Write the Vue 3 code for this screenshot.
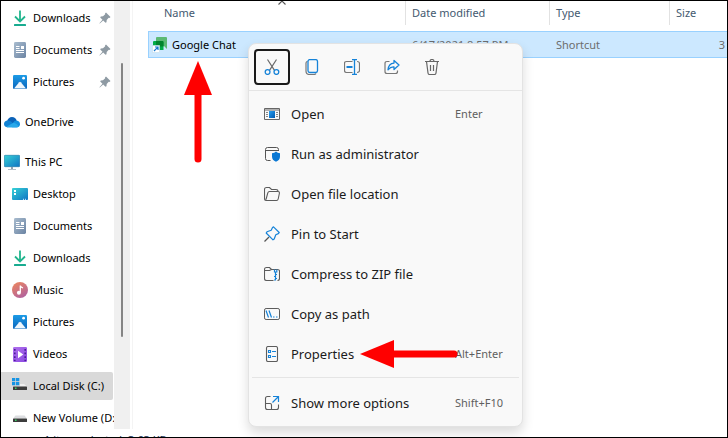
<script setup>
const groups = [
  {
    name: 'Quick access',
    items: [
      { label: 'Downloads', icon: 'downloads', pinned: true },
      { label: 'Documents', icon: 'documents', pinned: true },
      { label: 'Pictures', icon: 'pictures', pinned: true },
    ],
  },
  { name: 'Cloud', items: [{ label: 'OneDrive', icon: 'onedrive', root: true }] },
  {
    name: 'Computer',
    items: [
      { label: 'This PC', icon: 'pc', root: true },
      { label: 'Desktop', icon: 'desktop' },
      { label: 'Documents', icon: 'documents' },
      { label: 'Downloads', icon: 'downloads' },
      { label: 'Music', icon: 'music' },
      { label: 'Pictures', icon: 'pictures' },
      { label: 'Videos', icon: 'videos' },
      { label: 'Local Disk (C:)', icon: 'disk-c', selected: true },
      { label: 'New Volume (D:)', icon: 'disk-d' },
    ],
  },
]

const tools = [
  { label: 'Cut', icon: 'cut', focused: true },
  { label: 'Copy', icon: 'copy' },
  { label: 'Rename', icon: 'rename' },
  { label: 'Share', icon: 'share' },
  { label: 'Delete', icon: 'delete' },
]

const actions = [
  { label: 'Open', icon: 'open', keys: 'Enter' },
  { label: 'Run as administrator', icon: 'admin' },
  { label: 'Open file location', icon: 'folder' },
  { label: 'Pin to Start', icon: 'pin-start' },
  { label: 'Compress to ZIP file', icon: 'zip' },
  { label: 'Copy as path', icon: 'path' },
  { label: 'Properties', icon: 'properties', keys: 'Alt+Enter' },
]
</script>

<template>
  <div class="window">
    <svg class="sprite" aria-hidden="true">
      <defs>
        <linearGradient id="g-doc" x1="0" y1="0" x2="1" y2="1"><stop offset="0" stop-color="#a9bccf" /><stop offset="1" stop-color="#6b84a3" /></linearGradient>
        <linearGradient id="g-pic" x1="0" y1="0" x2="0" y2="1"><stop offset="0" stop-color="#1c9be6" /><stop offset="1" stop-color="#0a66bd" /></linearGradient>
        <linearGradient id="g-pc" x1="0" y1="0" x2="1" y2="1"><stop offset="0" stop-color="#37d2d6" /><stop offset="1" stop-color="#0f74c4" /></linearGradient>
        <linearGradient id="g-music" x1="0" y1="0" x2="0.6" y2="1"><stop offset="0" stop-color="#f0885b" /><stop offset="1" stop-color="#b3639c" /></linearGradient>
        <linearGradient id="g-video" x1="0" y1="0" x2="1" y2="1"><stop offset="0" stop-color="#b070ee" /><stop offset="1" stop-color="#8a48e0" /></linearGradient>
        <linearGradient id="g-open" x1="0" y1="0" x2="1" y2="1"><stop offset="0" stop-color="#29a0f0" /><stop offset="1" stop-color="#0058b0" /></linearGradient>
      </defs>

      <symbol id="downloads" viewBox="0 0 16 16">
        <path d="M8 0.5V11M3 6.5L8 11.4L13 6.5" fill="none" stroke="#22b58e" stroke-width="1.8" />
        <rect x="2" y="14" width="12" height="2" rx="0.6" fill="#18ab90" />
      </symbol>
      <symbol id="documents" viewBox="0 0 16 16">
        <rect x="2" y="0" width="12" height="16" rx="1.4" fill="url(#g-doc)" />
        <path d="M4 4.5H7.5M4 6.5H7.5M4 8.5H12M4 10.5H12" stroke="#fff" stroke-width="1" />
        <rect x="9" y="4" width="3" height="3" fill="#fff" />
      </symbol>
      <symbol id="pictures" viewBox="0 0 16 16">
        <rect x="1" y="1" width="14" height="14" rx="1.2" fill="url(#g-pic)" />
        <path d="M2 14.6L7.2 8.2Q8 7.4 8.8 8.2L14 14.6Z" fill="#eef7fd" />
        <circle cx="11.6" cy="4.2" r="1.4" fill="#fff" />
      </symbol>
      <symbol id="onedrive" viewBox="0 0 16 16">
        <path d="M3 7.5Q4.200 3 8 3Q11.500 3 12.700 6.500L9 10Z" fill="#0b62b8" />
        <path d="M3.600 13.200Q0 13 0 10Q0 7.200 3 6.600Q5 6.200 7 7.500L11 11Z" fill="#1182d4" />
        <path d="M9 9Q10 6.300 12.600 6.500Q16 7 16 10.200Q15.800 13 13 13.300H8Z" fill="#1490df" />
        <path d="M2.200 12.700L9.500 8.800Q12 8.500 14.800 12.300Q14 13.500 12.500 13.500H4Q3 13.500 2.200 12.700Z" fill="#28a8ea" />
      </symbol>
      <symbol id="pc" viewBox="0 0 16 16">
        <rect x="0.300" y="1.300" width="15.400" height="11.400" rx="0.800" fill="url(#g-pc)" stroke="#1673a5" stroke-width="0.600" />
        <path d="M8 13V15.500" stroke="#8fa0ae" stroke-width="2" />
        <path d="M4 15.500H12" stroke="#b2bec8" stroke-width="1" />
      </symbol>
      <symbol id="desktop" viewBox="0 0 16 16">
        <rect x="0" y="2" width="16" height="12" rx="1" fill="url(#g-pc)" />
        <path d="M2 5H4M2 8H4" stroke="#fff" stroke-width="1.800" />
        <path d="M11 13.300H12M13 13.300H14" stroke="#e3f8ff" stroke-width="1" />
      </symbol>
      <symbol id="music" viewBox="0 0 16 16">
        <circle cx="8" cy="8" r="8" fill="url(#g-music)" />
        <path d="M8.300 10.500V3.600Q8.500 5.200 11 6" fill="none" stroke="#fff" stroke-width="1.300" />
        <circle cx="6.900" cy="10.800" r="2" fill="#fff" />
      </symbol>
      <symbol id="videos" viewBox="0 0 16 16">
        <rect x="1" y="1" width="14" height="15" rx="1.200" fill="url(#g-video)" />
        <path d="M2.800 3V15M13.200 3V15" stroke="#4a1d96" stroke-width="1.600" stroke-dasharray="1.700 1.900" />
        <path d="M6 4.800L11.300 8.500L6 12.200Z" fill="#fff" />
      </symbol>
      <symbol id="disk-c" viewBox="0 0 16 16">
        <path d="M0 0H3.300V3.300H0ZM4 0H7.300V3.300H4ZM0 4H3.300V7.300H0ZM4 4H7.300V7.300H4Z" fill="#1594e4" />
        <path d="M8 6H12L15 8.500H1L2.500 7.900H8Z" fill="#f0f0f0" />
        <rect x="1" y="8.500" width="14" height="3.500" rx="0.600" fill="#3c3c3c" />
        <rect x="3" y="9.500" width="1.500" height="1.500" fill="#37d463" />
      </symbol>
      <symbol id="disk-d" viewBox="0 0 16 16">
        <path d="M3.500 5.500H12.500L15 8.500H1Z" fill="#dcdde0" />
        <rect x="1" y="8.500" width="14" height="3.500" rx="0.600" fill="#3c3c3c" />
        <rect x="3" y="9.500" width="1.500" height="1.500" fill="#37d463" />
      </symbol>
      <symbol id="pin" viewBox="0 0 12 12">
        <path d="M7 0.500L11.500 5L10.500 6L9.700 5.800L7.700 8L7.500 10.200L6.500 10.800L4.200 8.400L0.800 11.600L0.400 11.200L3.500 7.700L1.200 5.500L1.800 4.500L4 4.300L6.200 2.300L6 1.500Z" fill="#8e9aa3" />
      </symbol>
      <symbol id="chat" viewBox="0 0 16 16">
        <path d="M5 0H14Q15 0 15 1V12L12 9H5Q4 9 4 8V1Q4 0 5 0Z" fill="#5bb974" />
        <path d="M2 4H10Q11.500 4 11.500 5.500V13H3L1 10V5Q1 4 2 4Z" fill="#00ac47" />
        <path d="M4 4H10.500Q11.500 4 11.500 5V9.500H4Z" fill="#00832d" />
        <rect x="0.500" y="8.500" width="7" height="7" fill="#fff" stroke="#c4dcec" stroke-width="0.600" />
        <path d="M2 14L5.700 10.300M3 10H6V13" fill="none" stroke="#1577cf" stroke-width="1.200" />
      </symbol>

      <symbol id="cut" viewBox="0 0 16 16">
        <path d="M3.500 0.500L10.500 11.300M12.500 0.500L5.500 11.300" fill="none" stroke="#6a6a6a" stroke-width="1.200" />
        <circle cx="3.600" cy="13" r="2.400" fill="none" stroke="#1683d8" stroke-width="1.300" />
        <circle cx="12.400" cy="13" r="2.400" fill="none" stroke="#1683d8" stroke-width="1.300" />
      </symbol>
      <symbol id="copy" viewBox="0 0 16 16">
        <path d="M3.500 2.200Q2 2.700 2 4V12Q2 15.500 5.500 15.500H10Q11.500 15.500 12 14.500" fill="none" stroke="#777" stroke-width="1.200" />
        <rect x="4" y="0.600" width="9.500" height="12.900" rx="1.800" fill="none" stroke="#1683d8" stroke-width="1.300" />
      </symbol>
      <symbol id="rename" viewBox="0 0 16 16">
        <path d="M8.500 2.500H2.500Q0.500 2.500 0.500 4.500V11.500Q0.500 13.500 2.500 13.500H8.500M13 2.500Q15.500 2.500 15.500 4.500V11.500Q15.500 13.500 13 13.500" fill="none" stroke="#777" stroke-width="1.200" />
        <path d="M2.500 8H8.500" stroke="#1683d8" stroke-width="2" />
        <path d="M8 0.500H13M10.500 0.500V15.500M8 15.500H13" fill="none" stroke="#1683d8" stroke-width="1.300" />
      </symbol>
      <symbol id="share" viewBox="0 0 16 16">
        <path d="M5.500 2.500H3Q1 2.500 1 4.500V12.500Q1 14.500 3 14.500H11.500Q13.500 14.500 13.500 12.500V11.500" fill="none" stroke="#777" stroke-width="1.200" />
        <path d="M10 1.500L15 6L10 10.500V8Q6.500 7.700 4 10.800Q4.500 4.500 10 4.100Z" fill="none" stroke="#1683d8" stroke-width="1.300" stroke-linejoin="round" />
      </symbol>
      <symbol id="delete" viewBox="0 0 16 16">
        <path d="M1 2.500H15M2.500 2.500L4 14Q4.200 15.500 5.500 15.500H10.500Q11.800 15.500 12 14L13.500 2.500M6 2.500Q6 0.500 8 0.500Q10 0.500 10 2.500M6.500 6V12M9.500 6V12" fill="none" stroke="#666" stroke-width="1.200" />
      </symbol>

      <symbol id="open" viewBox="0 0 16 16">
        <path d="M0.500 2.500H15.500V13.500H0.500ZM0.500 4H15.500" fill="none" stroke="#666" />
        <path d="M2 6.500H4M2 8.500H4M2 10.500H4M12 6.500H14M12 8.500H14M12 10.500H14" stroke="#888" stroke-width="1" />
        <rect x="5" y="5" width="6" height="7" fill="url(#g-open)" />
      </symbol>
      <symbol id="admin" viewBox="0 0 16 16">
        <path d="M6.500 14.500H3.500Q1.500 14.500 1.500 12.500V3.500Q1.500 1.500 3.500 1.500H12.500Q14.500 1.500 14.500 3.500V5M1.500 4.500H14.500" fill="none" stroke="#555" />
        <path d="M12 5.500Q13.500 7.200 16 7.200V10.500Q16 14.200 12 15.800Q8 14.200 8 10.500V7.200Q10.500 7.200 12 5.500Z" fill="#0a78d4" />
      </symbol>
      <symbol id="folder" viewBox="0 0 16 16">
        <path d="M2.500 14.500Q0.500 14.500 0.500 12.500V3.500Q0.500 1.500 2.500 1.500H5.500L7.500 3.500H12Q14 3.500 14.200 5.500M2.500 14.500H12.500Q13.900 14.500 14.200 13L15.400 7.300Q15.500 5.500 14 5.500H5.500Q4.200 5.500 3.800 6.800L2 13.500" fill="none" stroke="#5c5c5c" stroke-width="1.100" />
      </symbol>
      <symbol id="pin-start" viewBox="0 0 16 16">
        <path d="M0.500 15.500L5 11" stroke="#555" stroke-width="1.200" />
        <path d="M9.500 0.800L15.200 6.500L14.300 7.600L11.800 8.800L10.200 13L9 13.800L2.200 7L3 5.800L7.200 4.200L8.400 1.700Z" fill="none" stroke="#1683d8" stroke-width="1.200" stroke-linejoin="round" />
      </symbol>
      <symbol id="zip" viewBox="0 0 16 16">
        <path d="M9.500 14.500H2.500Q0.500 14.500 0.500 12.500V3.500Q0.500 1.500 2.500 1.500H5.500L7.500 3.500H13.500Q15.500 3.500 15.500 5V12.500Q15.500 14.500 13.500 14.500M0.500 4.500H5.500L7.500 3.500" fill="none" stroke="#5c5c5c" stroke-width="1.100" />
        <path d="M10.500 3.500V6H12.800V3.500M11.500 6V14.500M11.500 8.500H13M10 10.500H11.500M11.500 12.500H13M10 14H11.500" fill="none" stroke="#1683d8" stroke-width="1.200" />
      </symbol>
      <symbol id="path" viewBox="0 0 16 16">
        <rect x="0.500" y="2.500" width="15" height="11" rx="1.600" fill="none" stroke="#5c5c5c" />
        <path d="M2 4.500L4.500 11.500M5 4.500L7.500 11.500M9 11H10.500M12 11H13.500" fill="none" stroke="#1683d8" stroke-width="1.200" />
      </symbol>
      <symbol id="properties" viewBox="0 0 16 16">
        <rect x="2.500" y="0.500" width="11" height="15" rx="1.600" fill="none" stroke="#5c5c5c" stroke-width="1.100" />
        <path d="M4.500 4.500H6.500V6.500H4.500ZM8 5.500H12M4.500 9.500H6.500V11.500H4.500ZM8 10.500H12" fill="none" stroke="#1683d8" stroke-width="1.100" />
      </symbol>
      <symbol id="more" viewBox="0 0 16 16">
        <path d="M6.500 1.500H3.500Q1.500 1.500 1.500 3.500V12.500Q1.500 14.500 3.500 14.500H12.500Q14.500 14.500 14.500 12.500V9.500M1.500 8.500H6Q7.500 8.500 7.500 10V14.500" fill="none" stroke="#5c5c5c" stroke-width="1.100" />
        <path d="M9 1.500H14.500V7M14.500 1.500L8.500 7.500" fill="none" stroke="#1683d8" stroke-width="1.200" />
      </symbol>
    </svg>

    <div class="body">
      <nav class="sidebar" aria-label="Folders">
        <ul v-for="group in groups" :key="group.name" class="group">
          <li v-for="item in group.items" :key="item.label">
            <a href="#" class="place" :class="{ root: item.root, selected: item.selected }">
              <svg class="icon" aria-hidden="true"><use :href="'#' + item.icon" /></svg>
              <span class="place-name">{{ item.label }}</span>
              <svg v-if="item.pinned" class="pin" aria-hidden="true"><use href="#pin" /></svg>
            </a>
          </li>
        </ul>
      </nav>
      <div class="scrollbar"><div class="thumb"></div></div>

      <main class="files">
        <svg class="sort" viewBox="0 0 8 5" aria-hidden="true"><path d="M0.500 4.500L4 1L7.500 4.500" fill="none" stroke="#555" stroke-width="1.100" /></svg>
        <table>
          <thead>
            <tr>
              <th>Name</th>
              <th>Date modified</th>
              <th>Type</th>
              <th>Size</th>
            </tr>
          </thead>
          <tbody>
            <tr>
              <td class="name"><svg class="icon" aria-hidden="true"><use href="#chat" /></svg>Google Chat</td>
              <td>6/17/2021 8:57 PM</td>
              <td>Shortcut</td>
              <td class="size">3</td>
            </tr>
          </tbody>
        </table>
      </main>
    </div>

    <footer class="status"><span>1 item selected</span><span>3.63 KB</span></footer>

    <div class="menu" role="menu">
      <div class="tools">
        <button v-for="tool in tools" :key="tool.label" type="button" class="tool" :class="{ focused: tool.focused }" :aria-label="tool.label">
          <svg class="icon" aria-hidden="true"><use :href="'#' + tool.icon" /></svg>
        </button>
      </div>
      <div class="actions">
        <button v-for="action in actions" :key="action.label" type="button" role="menuitem" class="action">
          <svg class="icon" aria-hidden="true"><use :href="'#' + action.icon" /></svg>
          <span>{{ action.label }}</span>
          <kbd v-if="action.keys">{{ action.keys }}</kbd>
        </button>
      </div>
      <div class="actions extra">
        <button type="button" role="menuitem" class="action">
          <svg class="icon" aria-hidden="true"><use href="#more" /></svg>
          <span>Show more options</span>
          <kbd>Shift+F10</kbd>
        </button>
      </div>
    </div>

    <svg class="arrow arrow-up" viewBox="0 0 28 102" aria-hidden="true">
      <path d="M14 30V98" stroke="#f00" stroke-width="7" stroke-linecap="round" />
      <path d="M14 0L28 34H0Z" fill="#f00" />
    </svg>
    <svg class="arrow arrow-left" viewBox="0 0 98 28" aria-hidden="true">
      <path d="M30 14H94" stroke="#f00" stroke-width="7" stroke-linecap="round" />
      <path d="M0 14L34 0V28Z" fill="#f00" />
    </svg>
  </div>
</template>

<style>
body {
  margin: 0;
}
</style>

<style scoped>
.window {
  position: relative;
  display: flex;
  flex-direction: column;
  box-sizing: border-box;
  height: 100vh;
  border: 1px solid #000;
  background: #fff;
  overflow: hidden;
  font: 11px/16px "Noto Sans", "Open Sans", sans-serif;
  color: #000;
}
.sprite {
  position: absolute;
  width: 0;
  height: 0;
}
.icon {
  flex: none;
  width: 16px;
  height: 16px;
}
.body {
  display: flex;
  flex: 1;
  min-height: 0;
}

.sidebar {
  display: flex;
  flex-direction: column;
  gap: 8px;
  box-sizing: border-box;
  width: 113px;
  padding-top: 1px;
  overflow: hidden;
}
.group {
  margin: 0;
  padding: 0;
  list-style: none;
}
.place {
  display: flex;
  align-items: center;
  gap: 5px;
  height: 28px;
  margin: 2px 0;
  padding-left: 11px;
  color: inherit;
  text-decoration: none;
  white-space: nowrap;
}
.group li {
  display: flow-root;
}
.place.root {
  padding-left: 3px;
}
.place.selected {
  margin-right: 1px;
  border-radius: 0 2px 2px 0;
  background: #d9d9d9;
}
.place-name {
  flex: 1;
  min-width: 0;
}
.pin {
  flex: none;
  width: 12px;
  height: 12px;
  margin-right: 3px;
}
.scrollbar {
  box-sizing: border-box;
  width: 16px;
  padding: 62px 7px 92px;
  background: #f0f0f0;
}
.thumb {
  height: 100%;
  border-radius: 1px;
  background: #858585;
}

.files {
  position: relative;
  flex: 1;
  min-width: 0;
  margin-left: 2px;
  padding-left: 15px;
  border-left: 1px solid #f4f4f4;
}
.sort {
  position: absolute;
  top: -1px;
  left: 145px;
  width: 8px;
  height: 5px;
}
table,
thead,
tbody {
  display: block;
}
tr {
  display: grid;
  grid-template-columns: 258px 144px 120px 1fr;
}
th,
td {
  padding: 0 6px;
  text-align: left;
  font-weight: 400;
  white-space: nowrap;
}
thead tr {
  margin-bottom: 6px;
  color: #44596f;
}
th {
  padding-top: 4px;
  padding-bottom: 4px;
  border-right: 1px solid #e2e2e2;
}
th:first-child {
  padding-left: 16px;
}
th:last-child {
  border-right: 0;
}
tbody tr {
  align-items: center;
  height: 27px;
  background: #cce8ff;
  box-shadow: inset 0 1px #99d1ff, inset 1px 0 #99d1ff, inset 0 -1px #99d1ff;
  color: #6d6d6d;
}
.name {
  display: flex;
  align-items: center;
  gap: 4px;
  padding-left: 4px;
  color: #000;
}
.size {
  padding-right: 2px;
  text-align: right;
}

.status {
  display: flex;
  gap: 6px;
  height: 8px;
  padding: 0 43px;
  line-height: 22px;
  color: #1a3050;
  overflow: hidden;
}

.menu {
  position: absolute;
  top: 42px;
  left: 247px;
  box-sizing: border-box;
  width: 275px;
  border: 1px solid #e3e3e3;
  border-radius: 8px;
  background: #f9f9f9;
  box-shadow: 0 6px 12px rgba(0, 0, 0, 0.14);
}
.tools {
  display: flex;
  gap: 4px;
  padding: 5px;
  border-bottom: 1px solid #e5e5e5;
}
.tool {
  display: grid;
  place-items: center;
  box-sizing: border-box;
  width: 36px;
  height: 36px;
  padding: 0;
  border: 0;
  border-radius: 4px;
  background: none;
}
.tool.focused {
  border: 2px solid #1a1a1a;
}
.actions {
  padding: 3px;
}
.extra {
  margin: 0 3px;
  padding: 5px 0 3px;
  border-top: 1px solid #e5e5e5;
}
.action {
  display: grid;
  grid-template-columns: 16px 153px 1fr;
  align-items: center;
  column-gap: 11px;
  width: 100%;
  height: 40px;
  padding: 0 0 0 12px;
  border: 0;
  background: none;
  color: #1b1b1b;
  font: 13px/20px "Noto Sans", "Open Sans", sans-serif;
  text-align: left;
  white-space: nowrap;
}
kbd {
  color: #5f5f5f;
  font: 11px/16px "Noto Sans", "Open Sans", sans-serif;
}

.arrow {
  position: absolute;
}
.arrow-up {
  top: 60px;
  left: 183px;
  width: 28px;
  height: 102px;
}
.arrow-left {
  top: 339px;
  left: 359px;
  width: 98px;
  height: 28px;
}
</style>
